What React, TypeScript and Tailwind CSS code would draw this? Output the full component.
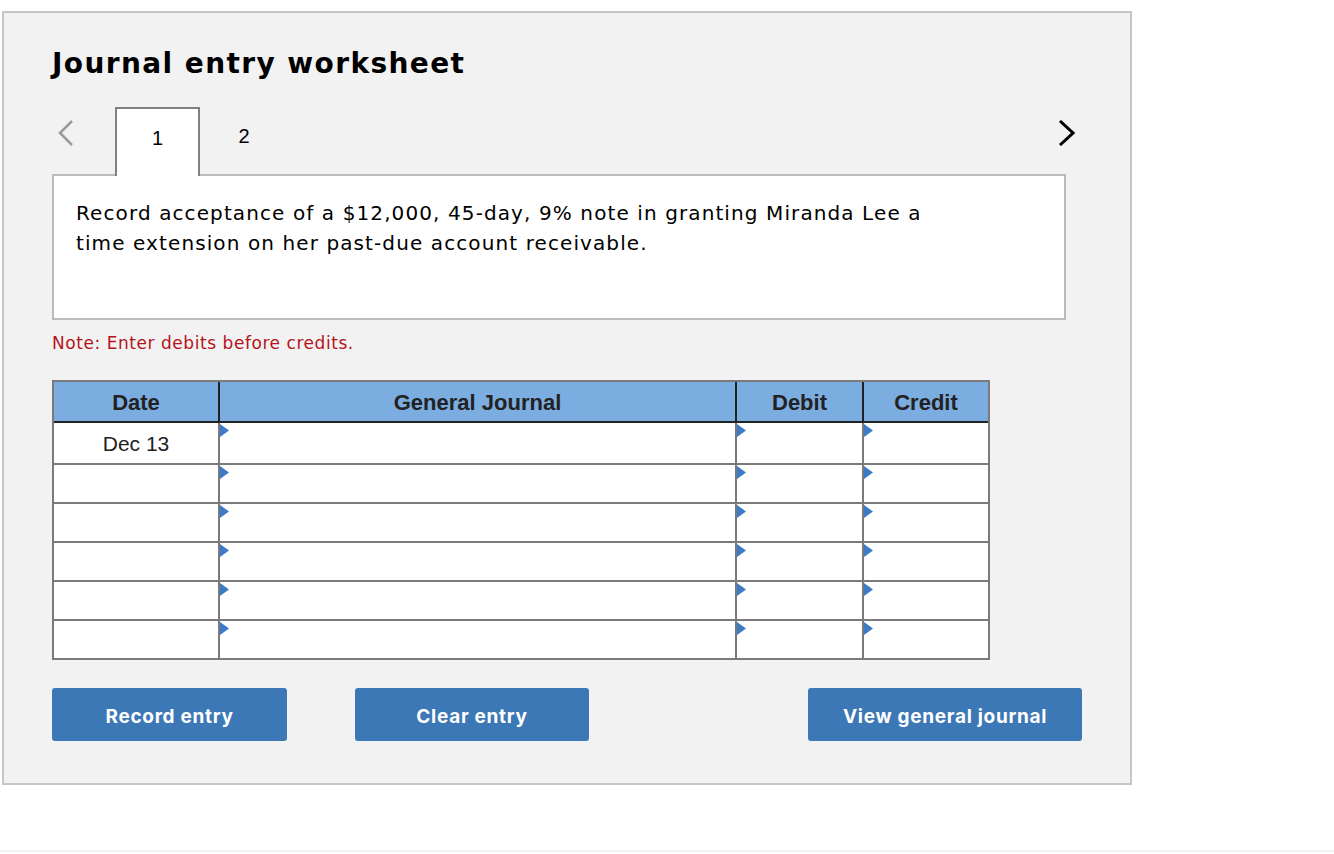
import React from "react";

const rows = ["Dec 13", "", "", "", "", ""];

const Marker = () => (
  <svg width="9" height="13" viewBox="0 0 9 13" className="absolute left-0 top-[1px]">
    <polygon points="0,0 9,6.5 0,13" fill="#3d7bc4" />
  </svg>
);

export default function App() {
  return (
    <div className="min-h-[854px] bg-white">
      <div className="pt-[11px] pl-[2px]">
        {/* WORKSHEET PANEL */}
        <div className="w-[1130px] h-[774px] border-2 border-[#c6c6c6] bg-[#f2f2f2] pl-[48px] pt-[34px]">
          <h1 className="text-[28px] leading-[34px] font-bold tracking-[1.4px] text-black font-['DejaVu_Sans',sans-serif]">
            Journal entry worksheet
          </h1>

          {/* TABS */}
          <div className="mt-[26px] flex h-[69px] w-[1030px] relative z-10">
            <div className="w-[63px] pt-[13px] pl-[6px]">
              <svg width="16" height="26" viewBox="0 0 16 26">
                <polyline points="14,1 2,13 14,25" fill="none" stroke="#9a9a9a" strokeWidth="2.5" />
              </svg>
            </div>
            <div className="w-[85px] h-[69px] border-2 border-b-0 border-[#808080] bg-white flex justify-center pt-[17px]">
              <span className="text-[20px] leading-[24px] text-black font-['Liberation_Sans',Arial,sans-serif]">1</span>
            </div>
            <div className="w-[88px] flex justify-center pt-[17px]">
              <span className="text-[20px] leading-[24px] text-black font-['Liberation_Sans',Arial,sans-serif]">2</span>
            </div>
            <div className="flex-1 flex justify-end pr-[7px] pt-[13px]">
              <svg width="17" height="26" viewBox="0 0 17 26">
                <polyline points="2,1 15,13 2,25" fill="none" stroke="#000" strokeWidth="3" />
              </svg>
            </div>
          </div>

          {/* QUESTION */}
          <div className="-mt-[2px] w-[1014px] h-[146px] border-2 border-[#bbbbbb] bg-white pl-[22px] pt-[22px]">
            <p className="w-[880px] text-[20px] leading-[30px] tracking-[1.1px] text-black font-['DejaVu_Sans',sans-serif]">
              Record acceptance of a $12,000, 45-day, 9% note in granting Miranda Lee a time extension on her past-due account receivable.
            </p>
          </div>

          <p className="mt-[12px] text-[17px] leading-[22px] tracking-[0.55px] text-[#b5121b] font-['DejaVu_Sans',sans-serif]">
            Note: Enter debits before credits.
          </p>

          {/* JOURNAL TABLE */}
          <div className="mt-[26px] w-[938px] border-2 border-[#7a7a7a] font-['Liberation_Sans',Arial,sans-serif] text-[#222]">
            <div className="grid grid-cols-[164px_517px_127px_126px] h-[41px] bg-[#7bade1] border-b-2 border-[#222] text-[22px] font-bold">
              <div className="flex items-center justify-center pt-[2px]">Date</div>
              <div className="flex items-center justify-center pt-[2px] border-l-2 border-[#222]">General Journal</div>
              <div className="flex items-center justify-center pt-[2px] border-l-2 border-[#222]">Debit</div>
              <div className="flex items-center justify-center pt-[2px] border-l-2 border-[#222]">Credit</div>
            </div>
            {rows.map((date, i) => (
              <div
                key={i}
                className={`grid grid-cols-[164px_517px_127px_126px] bg-white text-[21px] ${
                  i === 0 ? "h-[40px]" : "h-[39px] border-t-2 border-[#7a7a7a]"
                }`}
              >
                <div className="flex items-center justify-center pt-[1px]">{date}</div>
                <div className="relative border-l-2 border-[#7a7a7a]">
                  <Marker />
                </div>
                <div className="relative border-l-2 border-[#7a7a7a]">
                  <Marker />
                </div>
                <div className="relative border-l-2 border-[#7a7a7a]">
                  <Marker />
                </div>
              </div>
            ))}
          </div>

          {/* BUTTONS */}
          <div className="mt-[28px] flex w-[1030px] font-['Inter',sans-serif] text-[19px] font-bold tracking-[0.7px] text-white">
            <button className="w-[235px] h-[53px] pt-[5px] rounded-[3px] bg-[#3c77b6]">Record entry</button>
            <button className="ml-[68px] w-[234px] h-[53px] pt-[5px] rounded-[3px] bg-[#3c77b6]">Clear entry</button>
            <button className="ml-auto w-[274px] h-[53px] pt-[5px] rounded-[3px] bg-[#3c77b6]">View general journal</button>
          </div>
        </div>
      </div>
      <div className="mt-[65px] h-[2px] bg-[#f2f2f2]" />
    </div>
  );
}
